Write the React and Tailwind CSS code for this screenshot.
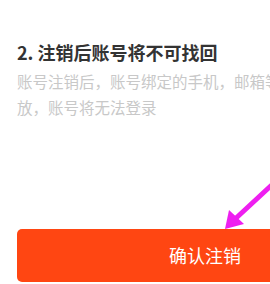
import React from 'react';

// 注销确认页底部：提示文字 + 确认按钮（按钮右侧超出视口被裁掉）
const App = () => (
  <div
    className="relative w-[270px] h-[284px] overflow-hidden bg-white pl-[17px] pt-[40px]"
    style={{ fontFamily: '"Noto Sans CJK SC", "Noto Sans", sans-serif' }}
  >
    <p className="text-[18px] leading-[24px] font-bold text-[#333333] whitespace-nowrap">
      2. 注销后账号将不可找回
    </p>
    <p className="mt-[4px] w-[380px] text-[15.5px] leading-[26px] text-[#c8c8c8]">
      账号注销后，账号绑定的手机，邮箱等将被释
      <br />
      放，账号将无法登录
    </p>

    <button className="mt-[109px] w-[376px] h-[53px] shrink-0 rounded-[5px] bg-[#ff4612] text-white text-[18px] flex items-center justify-center">
      确认注销
    </button>

    {/* 标注箭头 */}
    <svg className="absolute left-0 top-0" width="270" height="284" viewBox="0 0 270 284">
      <line x1="276" y1="181" x2="234" y2="220" stroke="#ee1ff0" strokeWidth="5" strokeLinecap="round" />
      <polygon points="225,229 229,210 244,224" fill="#ee1ff0" />
    </svg>
  </div>
);

export default App;
